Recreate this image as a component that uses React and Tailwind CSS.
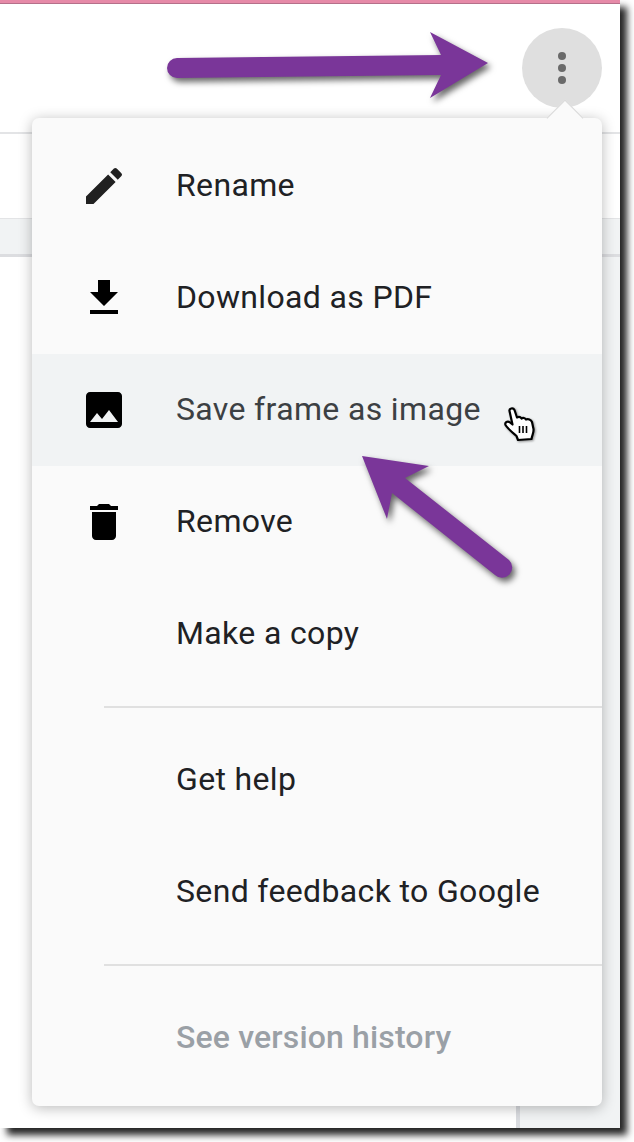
const rows = [
  { label: 'Rename', icon: 'pencil' },
  { label: 'Download as PDF', icon: 'download' },
  { label: 'Save frame as image', icon: 'image', active: true },
  { label: 'Remove', icon: 'trash' },
  { label: 'Make a copy' },
];

function MenuIcon({ name }) {
  if (name === 'pencil') {
    return (
      <svg className="w-12 h-12 text-[#212121]" viewBox="0 0 24 24" fill="currentColor">
        <path d="M3 17.25V21h3.75L17.81 9.94l-3.75-3.75L3 17.25zM20.71 7.04a1 1 0 0 0 0-1.41l-2.34-2.34a1 1 0 0 0-1.41 0l-1.83 1.83 3.75 3.75 1.83-1.83z" />
      </svg>
    );
  }
  if (name === 'download') {
    return (
      <svg className="w-12 h-12 text-black" viewBox="0 0 24 24" fill="currentColor">
        <path d="M19 9h-4V3H9v6H5l7 7 7-7zM5 18v2h14v-2H5z" />
      </svg>
    );
  }
  if (name === 'image') {
    return (
      <svg className="w-12 h-12 text-black" viewBox="0 0 24 24" fill="currentColor">
        <path d="M21 19V5c0-1.1-.9-2-2-2H5c-1.1 0-2 .9-2 2v14c0 1.1.9 2 2 2h14c1.1 0 2-.9 2-2zM8.5 13.5l2.5 3.01L14.5 12l4.5 6H5l3.5-4.5z" />
      </svg>
    );
  }
  if (name === 'trash') {
    return (
      <svg className="w-12 h-12 text-black" viewBox="0 0 24 24" fill="currentColor">
        <path d="M6 19c0 1.1.9 2 2 2h8c1.1 0 2-.9 2-2V7H6v12zM19 4h-3.5l-1-1h-5l-1 1H5v2h14V4z" />
      </svg>
    );
  }
  return <div className="w-12 h-12" />;
}

function Row({ label, icon, active, disabled }) {
  return (
    <div className={`h-[112px] flex items-center ${active ? 'bg-[#f1f3f4]' : ''}`}>
      <div className="w-[145px] pl-12 shrink-0">
        <MenuIcon name={icon} />
      </div>
      <span className={`text-[32px] leading-none pb-0.5 -ml-px ${disabled ? 'text-[#9aa0a6] font-medium tracking-[0.15px]' : active ? 'text-[#3c4043] tracking-[0.35px]' : 'text-[#202124] tracking-[0.35px]'}`}>
        {label}
      </span>
    </div>
  );
}

export default function App() {
  return (
    <div className="w-[634px] h-[1142px] bg-white overflow-hidden font-['Roboto',sans-serif]">
      <div className="relative w-[620px] h-[1128px] bg-white shadow-[7px_7px_7px_rgba(0,0,0,0.85)] flex flex-col">
        <div className="h-1 bg-[#e68aa8] border-b border-[#b5708a]" />

        {/* page behind the menu */}
        <div className="h-[130px] border-b-2 border-[#e3e4e6]" />
        <div className="h-[84px]" />
        <div className="h-[39px] bg-[#f1f3f4] border-t border-[#e3e4e6] border-b-[3px] border-b-[#dcdde0]" />
        <div className="flex-1 flex justify-end">
          <div className="w-[104px] bg-[#f1f3f4] border-l-4 border-[#dadce0]" />
        </div>

        {/* kebab button */}
        <div className="absolute left-[522px] top-[28px] w-20 h-20 rounded-full bg-[#dfdfdf] flex flex-col items-center justify-center gap-[4px]">
          <div className="w-2 h-2 rounded-full bg-[#6a6a6a]" />
          <div className="w-2 h-2 rounded-full bg-[#6a6a6a]" />
          <div className="w-2 h-2 rounded-full bg-[#6a6a6a]" />
        </div>

        {/* menu */}
        <div className="absolute left-[32px] top-[118px] w-[570px] h-[988px] bg-[#fafafa] rounded-[7px] shadow-[0_2px_14px_rgba(0,0,0,0.28)] pt-3">
          <div className="absolute right-[24px] -top-[13px] w-[26px] h-[26px] rotate-45 bg-[#fafafa] border-l border-t border-[#d8d8d8]" />
          <div className="relative">
            {rows.map((r) => (
              <Row key={r.label} {...r} />
            ))}
            <div className="my-4 ml-[72px] border-t-2 border-[#e0e0e0]" />
            <Row label="Get help" />
            <Row label="Send feedback to Google" />
            <div className="my-4 ml-[72px] border-t-2 border-[#e0e0e0]" />
            <Row label="See version history" disabled />
          </div>
        </div>

        {/* annotation arrows */}
        <svg className="absolute left-0 top-0 w-[620px] h-[1128px] pointer-events-none drop-shadow-[3px_4px_3px_rgba(0,0,0,0.6)]" viewBox="0 0 620 1128" fill="#7a3699">
          <path d="M177 58 L441 55 L430 32 L488 63 L430 98 L441 75 L177 78 A10 10 0 0 1 177 58 Z" />
          <path d="M362 456 L429 466 L405 478 L509 560 A10 10 0 0 1 495 575 L392 493 L387 519 Z" />
        </svg>

        {/* pointer */}
        <svg className="absolute left-[504px] top-[406px] w-8 h-9 drop-shadow-[1px_1px_1px_rgba(0,0,0,0.4)]" viewBox="0 0 32 36" fill="#fff" stroke="#000" strokeWidth="2.2" strokeLinejoin="round">
          <path d="M5.5 5C5 2.5 9 1 10.5 4L13 11.5C15 10.5 16.5 11 17.5 12.5C19 11.5 21 12 22 13.5C24 12.5 27 13.5 28 16L29.5 23C30 27 28 29 27.5 33L14 34L12.5 30C9 27 4 23 1.5 19C.5 16.5 3.5 14.5 6 16.5L8.5 18.5Z" />
          <path d="M15.5 20v7M19 20v7M22.5 20v7" fill="none" strokeWidth="1.6" />
        </svg>
      </div>
    </div>
  );
}
